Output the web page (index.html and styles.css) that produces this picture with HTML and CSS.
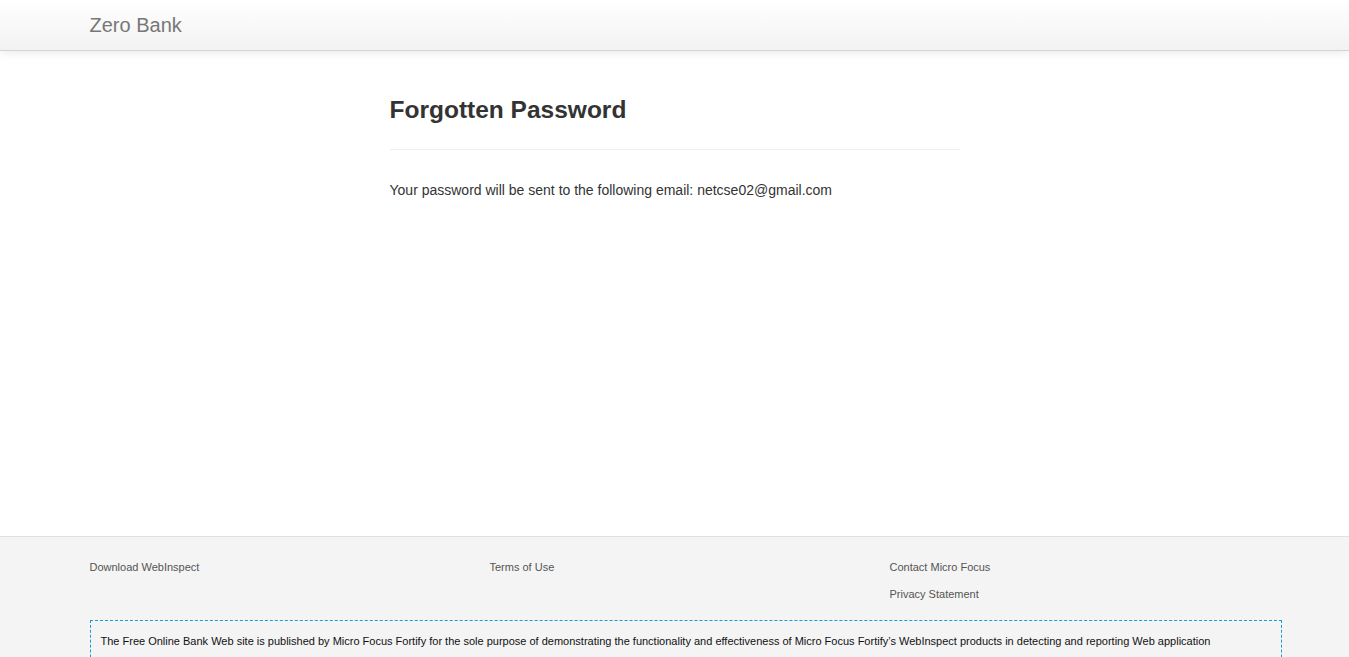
FILE: index.html
```html
<!DOCTYPE html>
<html>
<head>
<meta charset="utf-8">
<title>Zero - Forgotten Password</title>
<link rel="stylesheet" href="styles.css">
</head>
<body>
<div class="wrapper">
  <div class="navbar">
    <div class="container">
      <a class="brand" href="#">Zero Bank</a>
    </div>
  </div>
  <div class="main container">
    <div class="offset">
      <div class="page-header">
        <h3>Forgotten Password</h3>
      </div>
      <p class="msg">Your password will be sent to the following email: netcse02@gmail.com</p>
    </div>
  </div>
</div>
<div class="footer">
  <div class="container">
    <div class="links">
      <ul><li><a href="#">Download WebInspect</a></li></ul>
      <ul><li><a href="#">Terms of Use</a></li></ul>
      <ul><li><a href="#">Contact Micro Focus</a></li><li><a href="#">Privacy Statement</a></li></ul>
    </div>
    <div class="disclaimer">
      The Free Online Bank Web site is published by Micro Focus Fortify for the sole purpose of demonstrating the functionality and effectiveness of Micro Focus Fortify’s WebInspect products in detecting and reporting Web application vulnerabilities. This site is not a real banking site and any similarities to third party products and/or Web sites are purely coincidental. This site is provided "as is" without warranty of any kind, either express or implied.
    </div>
  </div>
</div>
</body>
</html>
```
FILE: styles.css
```css
* { box-sizing: border-box; }
html, body { margin: 0; padding: 0; }
body {
  font-family: "Liberation Sans", Arial, Helvetica, sans-serif;
  font-size: 14px;
  line-height: 20px;
  color: #333;
  background: #fff;
}
a { text-decoration: none; }
.container {
  width: 1170px;
  margin: 0 auto;
}
.wrapper { min-height: 536px; }
.navbar {
  height: 51px;
  background: linear-gradient(to bottom, #ffffff, #f2f2f2);
  border-bottom: 1px solid #d4d4d4;
  box-shadow: 0 1px 10px rgba(0,0,0,0.1);
}
.navbar .container { display: flex; align-items: center; height: 50px; }
.brand {
  font-size: 20px;
  color: #777;
  line-height: 20px;
}
.main { padding-top: 29px; }
.offset { margin-left: 300px; width: 570px; }
.page-header {
  padding-bottom: 9px;
  margin: 0 0 30px;
  border-bottom: 1px solid #eee;
}
.page-header h3 {
  margin: 10px 0;
  font-size: 24.5px;
  line-height: 40px;
  font-weight: bold;
  color: #333;
}
.msg { margin: 0 0 10px; }
.footer {
  background: #f4f4f4;
  border-top: 1px solid #e0e0e0;
  padding-top: 17px;
  min-height: 121px;
}
.links { display: flex; gap: 30px; }
.links ul {
  list-style: none;
  margin: 0;
  padding: 0;
  width: 370px;
}
.links li { line-height: 27px; font-size: 11px; }
.links a { color: #555; }
.disclaimer {
  margin-top: 12px;
  width: 1192px;
  border: 1px dashed #1a9ad6;
  padding: 10px 10px;
  font-size: 11px;
  line-height: 20px;
  color: #111;
}
```
